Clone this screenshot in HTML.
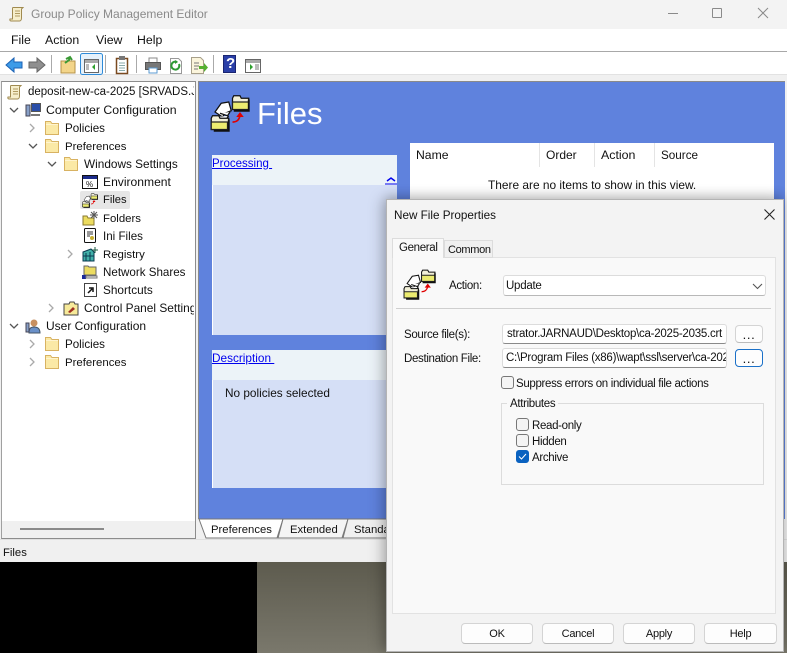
<!DOCTYPE html>
<html><head><meta charset="utf-8">
<style>
html,body{margin:0;padding:0;width:787px;height:653px;overflow:hidden;background:#000}
*{box-sizing:border-box}
#r{position:relative;width:787px;height:653px;overflow:hidden;font-family:"Liberation Sans",sans-serif;font-size:11.8px;color:#111}
.a{position:absolute}
.t{position:absolute;white-space:nowrap;line-height:16px;height:16px}
.d{font-size:11.5px;letter-spacing:-.33px}
.i{position:absolute;display:block;overflow:visible}
.inp{position:absolute;background:#fff;border:1px solid #dcdcdc;border-bottom:1px solid #8a8a8a;border-radius:3px;line-height:19px;padding-left:4px;overflow:hidden;white-space:nowrap;font-size:11.5px;letter-spacing:-.25px}
.btn{position:absolute;background:#fdfdfd;border:1px solid #d4d4d4;border-bottom-color:#bbb;border-radius:4px;text-align:center;line-height:21px;font-size:11px;letter-spacing:-.25px}
.dots{font-size:13px;letter-spacing:.6px;line-height:18px}
.cb{position:absolute;width:13px;height:13px;border:1px solid #777;border-radius:3px;background:#f4f4f4}
</style></head><body>
<div id="r">
<svg width="0" height="0" style="position:absolute"><defs>
<symbol id="fold" viewBox="0 0 16 16"><path d="M1.500 1.500h5l1.500 2h6.500v11h-13z" fill="#fbe9a6" stroke="#d8b262"/><path d="M2 4.500h12" stroke="#fff4cf"/></symbol>
<symbol id="scroll" viewBox="0 0 16 16"><path d="M4 1.500h10l-1.500 1.500v9c0 2-1 3-2 3H2c-1 0-1.500-1-1-2h2.500V3c0-1 0-1.500.5-1.500z" fill="#f6eecb" stroke="#a08a50"/><path d="M6 5h5M6 7.500h5M6 10h5" stroke="#b09a60"/></symbol>
<symbol id="files" viewBox="0 0 32 32">
<path d="M18 5l1-2h5l1 2h6v8H18z" fill="#f2f0d8" stroke="#111"/><path d="M18 8h13v6H18z" fill="#ecec70" stroke="#222"/><path d="M31 6v9H19" stroke="#111" stroke-width="1.500" fill="none"/>
<path d="M9 9l6-1 2 7-5 2-2 3-6-4z" fill="#fff" stroke="#111"/><path d="M8 17l6 2 2-3M6 20l6 3 3-4" fill="#fff" stroke="#111"/>
<path d="M1 21l1-2h5l1 2h7v9H1z" fill="#f2f0d8" stroke="#111"/><path d="M1 24h13v6H1z" fill="#ecec70" stroke="#222"/><path d="M15 22v9H3" stroke="#111" stroke-width="1.500" fill="none"/>
<path d="M18 24c3 0 5-1 6-5" fill="none" stroke="#e00000" stroke-width="1.300"/><path d="M21 20l3-4 3 4z" fill="#e00000"/>
</symbol>
</defs></svg>

<!-- desktop -->
<div class="a" style="left:0;top:562px;width:257px;height:91px;background:#000"></div>
<div class="a" style="left:257px;top:562px;width:530px;height:91px;background:linear-gradient(#5d5b4e,#7a786c)"></div>

<!-- window -->
<div class="a" style="left:0;top:0;width:787px;height:562px;background:#f0f0f0"></div>
<div class="a" style="left:0;top:0;width:787px;height:29px;background:#f3f3f3"></div>
<svg class="i" style="left:9px;top:5px" width="16" height="18"><use href="#scroll" width="16" height="18"/></svg>
<div class="t" style="left:31px;top:6px;color:#8a8a8a;font-size:12px">Group Policy Management Editor</div>
<div class="a" style="left:668px;top:13px;width:10px;height:1px;background:#8a8a8a"></div>
<div class="a" style="left:712px;top:8px;width:10px;height:10px;border:1px solid #8a8a8a;border-radius:1px"></div>
<svg class="i" style="left:757px;top:7px" width="12" height="12"><path d="M1 1l10 10M11 1L1 11" stroke="#8a8a8a" stroke-width="1"/></svg>

<div class="a" style="left:0;top:29px;width:787px;height:22px;background:#fff"></div>
<div class="a" style="left:0;top:51px;width:787px;height:1px;background:#a8a8a8"></div>
<div class="t" style="left:11px;top:32px;font-size:12.3px">File</div>
<div class="t" style="left:45px;top:32px;font-size:12.3px">Action</div>
<div class="t" style="left:96px;top:32px;font-size:12.3px">View</div>
<div class="t" style="left:137px;top:32px;font-size:12.3px">Help</div>

<div class="a" style="left:0;top:52px;width:787px;height:23px;background:#fff"></div>
<div class="a" style="left:0;top:74px;width:787px;height:1px;background:#e2e2e2"></div>
<!-- toolbar -->
<svg class="i" style="left:0;top:52px" width="270" height="24">
<path d="M6 13l8-7v4h8v6h-8v4z" fill="#3d9be8" stroke="#1c62b4"/>
<path d="M45 13l-8-7v4h-8v6h8v4z" fill="#8f8f8f" stroke="#666"/>
<rect x="51" y="3" width="1" height="18" fill="#aaa"/>
<path d="M61 9h14v12H61z" fill="#f3d58a" stroke="#b5924a"/><path d="M65 11l4-3 1-3M66 7l4-2 2 3" fill="none" stroke="#3a9a35" stroke-width="2"/>
<rect x="80.500" y="1.500" width="22" height="21" rx="2" fill="#e5f1fb" stroke="#2d8ad8"/>
<rect x="84.500" y="7.500" width="14" height="13" fill="#fff" stroke="#666"/><rect x="85" y="8" width="13" height="3" fill="#aaa"/><path d="M95 12v6l-3-3z" fill="#2da02d"/><path d="M86 13h3M86 15h3M86 17h3" stroke="#777"/>
<rect x="105" y="3" width="1" height="18" fill="#aaa"/>
<rect x="116.500" y="6.500" width="11" height="15" fill="#fff" stroke="#7a4a20" stroke-width="1.500"/><rect x="119" y="4" width="6" height="4" fill="#777"/><path d="M119 11h6M119 13.500h6M119 16h6M119 18.500h6" stroke="#8aa"/>
<rect x="136" y="3" width="1" height="18" fill="#aaa"/>
<rect x="149" y="6" width="8" height="5" fill="#fff" stroke="#888"/><rect x="145.500" y="10.500" width="15" height="7" fill="#777" stroke="#555"/><rect x="149" y="16" width="8" height="5" fill="#fff" stroke="#5a9ad0"/>
<path d="M170.500 6.500h8l3 3v12h-11z" fill="#fff" stroke="#999"/><path d="M179 12a4 4 0 1 1-2-2" fill="none" stroke="#2f9a35" stroke-width="2"/><path d="M175 8l3 2-3 2z" fill="#2f9a35"/>
<path d="M191.500 5.500h9l3 3v13h-12z" fill="#fbf5dc" stroke="#a8a08a"/><path d="M194 11h5M194 14h5M194 17h4" stroke="#777"/><path d="M199 14h5v-3l4 4.500-4 4.500v-3h-5z" fill="#55b030"/>
<rect x="213" y="3" width="1" height="18" fill="#aaa"/>
<rect x="223.500" y="3.500" width="12" height="17" fill="#2a3fa8" stroke="#1a2570"/>
<rect x="245.500" y="7.500" width="15" height="13" fill="#fff" stroke="#666"/><rect x="246" y="8" width="14" height="3" fill="#aaa"/><path d="M250 12v6l3-3z" fill="#2da02d"/><path d="M255 13h4M255 15h4M255 17h4" stroke="#777"/>
</svg>
<div class="t" style="left:226px;top:56px;color:#fff;font:bold 15px/16px 'Liberation Sans',sans-serif">?</div>

<!-- tree pane -->
<div class="a" style="left:1px;top:81px;width:195px;height:458px;background:#fff;border:1px solid #8c8c8c;border-left-color:#a0a0a0"></div>
<div class="a" style="left:2px;top:521px;width:193px;height:17px;background:#f0f0f0"></div>
<div class="a" style="left:20px;top:528px;width:84px;height:2px;background:#8a8a8a"></div>

<svg class="i" style="left:7px;top:83px" width="16" height="18"><use href="#scroll" width="16" height="18"/></svg>
<div class="a" style="left:2px;top:83px;width:192px;height:18px;overflow:hidden"><div class="t" style="left:26px;top:1px;font-size:11.5px">deposit-new-ca-2025 [SRVADS.JARNAUD.LAN]</div></div>

<svg class="i" style="left:0;top:100px" width="110" height="280" fill="none" stroke="#555" stroke-width="1.300">
<path d="M10 8l4 4 4-4"/><path d="M30 24l4 4-4 4" stroke="#aaa"/><path d="M29 44l4 4 4-4"/><path d="M48 62l4 4 4-4"/>
<path d="M68 150l4 4-4 4" stroke="#aaa"/><path d="M49 204l4 4-4 4" stroke="#aaa"/><path d="M10 224l4 4 4-4"/><path d="M30 240l4 4-4 4" stroke="#aaa"/><path d="M30 258l4 4-4 4" stroke="#aaa"/>
</svg>

<svg class="i" style="left:25px;top:102px" width="17" height="16"><rect x="6.500" y="1.500" width="9" height="8" fill="#2a4ea8" stroke="#555"/><rect x="1" y="3" width="4" height="11" fill="#88a0c8" stroke="#445"/><path d="M6 13h9" stroke="#777" stroke-width="2"/></svg>
<div class="t" style="left:46px;top:102px;font-size:12.3px">Computer Configuration</div>

<svg class="i" style="left:44px;top:120px" width="16" height="16"><use href="#fold"/></svg>
<div class="t" style="left:65px;top:121px;font-size:11.6px">Policies</div>
<svg class="i" style="left:44px;top:138px" width="16" height="16"><use href="#fold"/></svg>
<div class="t" style="left:65px;top:139px;font-size:11.4px">Preferences</div>
<svg class="i" style="left:63px;top:156px" width="16" height="16"><use href="#fold"/></svg>
<div class="t" style="left:84px;top:156px">Windows Settings</div>

<svg class="i" style="left:82px;top:175px" width="16" height="14"><rect x=".5" y=".5" width="15" height="13" fill="#fff" stroke="#111"/><rect x="1" y="1" width="14" height="3" fill="#1a2a8a"/><text x="4" y="12" font-size="8" font-family="Liberation Sans" fill="#111">%</text></svg>
<div class="t" style="left:103px;top:174px;font-size:12.1px">Environment</div>

<div class="a" style="left:80px;top:191px;width:50px;height:18px;background:#e6e6e6;border-radius:2px"></div>
<svg class="i" style="left:82px;top:192px" width="16" height="16"><use href="#files" width="16" height="16"/></svg>
<div class="t" style="left:103px;top:192px;font-size:11.2px">Files</div>

<svg class="i" style="left:82px;top:210px" width="16" height="16"><path d="M1 6h4l1 2h6v7H1z" fill="#ecdc60" stroke="#8a7a30"/><path d="M12 1v8M8 5h8M9 2l6 6M15 2L9 8" stroke="#555"/></svg>
<div class="t" style="left:103px;top:211px;font-size:11.4px">Folders</div>

<svg class="i" style="left:84px;top:227px" width="13" height="16"><rect x=".5" y="1.500" width="11" height="14" rx="1" fill="#fff" stroke="#111"/><path d="M3 5h6M3 7h6M3 9h3" stroke="#333"/><circle cx="8" cy="11" r="2" fill="#c8b030"/></svg>
<div class="t" style="left:103px;top:229px;font-size:11.6px">Ini Files</div>

<svg class="i" style="left:82px;top:246px" width="16" height="16"><path d="M1 6l8-3 3 3v9H1z" fill="#40b0a8" stroke="#0a3a50"/><path d="M4 7v8M8 6v9M1 10h11" stroke="#0a3a50"/><path d="M13 1v6M10 4h6" stroke="#1a5a40"/></svg>
<div class="t" style="left:103px;top:247px;font-size:11.4px">Registry</div>

<svg class="i" style="left:82px;top:264px" width="16" height="16"><path d="M2 2h4l1 1h7v8H2z" fill="#ecdc60" stroke="#666"/><rect x="0" y="11" width="4" height="4" fill="#1a2a9a"/><path d="M4 12h11v2H4z" fill="#eee" stroke="#777"/></svg>
<div class="t" style="left:103px;top:265px;font-size:11.6px">Network Shares</div>

<svg class="i" style="left:84px;top:283px" width="13" height="14"><rect x=".5" y=".5" width="12" height="13" fill="#fff" stroke="#444"/><path d="M4 10l4-4M5 5h4v4" fill="none" stroke="#111" stroke-width="1.500"/></svg>
<div class="t" style="left:103px;top:282px">Shortcuts</div>

<svg class="i" style="left:63px;top:300px" width="16" height="16"><path d="M1 4h5l1-2h4l1 2h3v11H1z" fill="#f7ea9a" stroke="#444"/><path d="M5 12l5-5 2 2-5 4z" fill="#a03020"/></svg>
<div class="a" style="left:2px;top:299px;width:192px;height:18px;overflow:hidden"><div class="t" style="left:82px;top:1px;font-size:11.9px">Control Panel Settings</div></div>

<svg class="i" style="left:25px;top:318px" width="17" height="16"><circle cx="9" cy="5" r="3.500" fill="#c89060"/><path d="M4 15c0-5 2-6 5-6s6 1 6 6z" fill="#6a90c8" stroke="#456"/><rect x="1" y="5" width="3" height="9" fill="#88a0c8" stroke="#445"/></svg>
<div class="t" style="left:46px;top:318px;font-size:12px">User Configuration</div>
<svg class="i" style="left:44px;top:336px" width="16" height="16"><use href="#fold"/></svg>
<div class="t" style="left:65px;top:337px;font-size:11.6px">Policies</div>
<svg class="i" style="left:44px;top:354px" width="16" height="16"><use href="#fold"/></svg>
<div class="t" style="left:65px;top:355px;font-size:11.4px">Preferences</div>

<!-- blue pane -->
<div class="a" style="left:198px;top:81px;width:587px;height:438px;background:#5f82dd;border:1px solid #8a8a8a;border-width:1px 0 0 1px"></div>
<svg class="i" style="left:210px;top:92px" width="40" height="40"><use href="#files" width="40" height="40"/></svg>
<div class="t" style="left:257px;top:95px;height:38px;line-height:38px;font-size:31px;color:#fff">Files</div>

<div class="a" style="left:212px;top:155px;width:185px;height:30px;background:#ecf3f8"></div>
<div class="a" style="left:213px;top:185px;width:184px;height:150px;background:#d5dff6"></div>
<div class="a" style="left:212px;top:185px;width:1px;height:150px;background:#fff"></div>
<div class="t" style="left:212px;top:156px;color:#0000ee;text-decoration:underline;white-space:pre;font-size:11.5px">Processing </div>
<svg class="i" style="left:385px;top:176px" width="12" height="9"><path d="M2 5l4-3 4 3" fill="none" stroke="#0000ee" stroke-width="1.500"/><path d="M0 8h12" stroke="#0000ee"/></svg>

<div class="a" style="left:212px;top:350px;width:185px;height:30px;background:#ecf3f8"></div>
<div class="a" style="left:213px;top:380px;width:184px;height:108px;background:#d5dff6"></div>
<div class="a" style="left:212px;top:380px;width:1px;height:108px;background:#fff"></div>
<div class="t" style="left:212px;top:350px;color:#0000ee;text-decoration:underline;white-space:pre">Description </div>
<div class="t" style="left:225px;top:385px">No policies selected</div>

<div class="a" style="left:410px;top:143px;width:364px;height:57px;background:#fff"></div>
<div class="a" style="left:539px;top:143px;width:1px;height:24px;background:#e4e4e4"></div>
<div class="a" style="left:594px;top:143px;width:1px;height:24px;background:#e4e4e4"></div>
<div class="a" style="left:654px;top:143px;width:1px;height:24px;background:#e4e4e4"></div>
<div class="t" style="left:416px;top:147px;font-size:12.2px">Name</div>
<div class="t" style="left:546px;top:147px;font-size:12px">Order</div>
<div class="t" style="left:601px;top:147px;font-size:12.4px">Action</div>
<div class="t" style="left:661px;top:148px;font-size:11.7px">Source</div>
<div class="t" style="left:488px;top:177px;font-size:11.9px">There are no items to show in this view.</div>

<!-- bottom tabs -->
<svg class="i" style="left:198px;top:519px" width="200" height="20">
<path d="M1 0l7 19h71l6-19z" fill="#fff" stroke="#777"/>
<path d="M85 0l-5 19h64l6-19z" fill="#f4f4f4" stroke="#777"/>
<path d="M145 19l5-19h50v19z" fill="#f0f0f0" stroke="#777"/>
</svg>
<div class="t" style="left:211px;top:522px;font-size:11.3px">Preferences</div>
<div class="t" style="left:290px;top:522px;font-size:11.3px">Extended</div>
<div class="t" style="left:354px;top:522px;font-size:11.3px">Standard</div>

<!-- status -->
<div class="a" style="left:0;top:539px;width:787px;height:1px;background:#e0e0e0"></div>
<div class="t" style="left:3px;top:545px;font-size:11.3px">Files</div>

<!-- dialog -->
<div class="a" style="left:386px;top:199px;width:398px;height:453px;background:#f3f3f3;border:1px solid #b4b4b4;box-shadow:-4px 0 14px rgba(0,0,0,.22),0 -3px 10px rgba(0,0,0,.15)"></div>
<div class="t" style="left:394px;top:208px;font-size:11.7px">New File Properties</div>
<svg class="i" style="left:764px;top:209px" width="11" height="11"><path d="M.5.500l10 10M10.500.500l-10 10" stroke="#222" stroke-width="1.100"/></svg>

<div class="a" style="left:392px;top:257px;width:384px;height:357px;background:#f9f9f9;border:1px solid #e2e2e2"></div>
<div class="a" style="left:444px;top:240px;width:49px;height:18px;background:#f0f0f0;border:1px solid #dcdcdc"></div>
<div class="a" style="left:392px;top:238px;width:52px;height:20px;background:#f9f9f9;border:1px solid #dcdcdc;border-bottom:0"></div>
<div class="t d" style="left:399px;top:240px">General</div>
<div class="t d" style="left:448px;top:242px;font-size:11px">Common</div>

<svg class="i" style="left:403px;top:267px" width="33" height="33"><use href="#files" width="33" height="33"/></svg>
<div class="t d" style="left:449px;top:278px">Action:</div>
<div class="inp" style="left:503px;top:275px;width:263px;height:21px;line-height:20px;padding-left:2px;border-color:#dcdcdc;border-bottom-color:#b8b8b8">Update</div>
<svg class="i" style="left:752px;top:283px" width="11" height="7"><path d="M1 1l4.500 4.500L10 1" fill="none" stroke="#555" stroke-width="1.100"/></svg>
<div class="a" style="left:396px;top:308px;width:375px;height:1px;background:#cfcfcf"></div>

<div class="t d" style="left:404px;top:327px">Source file(s):</div>
<div class="inp" style="left:502px;top:324px;width:225px;height:20px">strator.JARNAUD\Desktop\ca-2025-2035.crt</div>
<div class="btn dots" style="left:735px;top:325px;width:28px;height:18px">...</div>
<div class="t d" style="left:404px;top:351px">Destination File:</div>
<div class="inp" style="left:502px;top:348px;width:225px;height:20px;padding-left:3px">C:\Program Files (x86)\wapt\ssl\server\ca-2025-2035.crt</div>
<div class="btn dots" style="left:735px;top:349px;width:28px;height:18px;border:1.500px solid #1a70c8">...</div>

<div class="cb" style="left:501px;top:376px"></div>
<div class="t d" style="left:516px;top:376px">Suppress errors on individual file actions</div>

<div class="a" style="left:501px;top:403px;width:263px;height:82px;border:1px solid #dcdcdc"></div>
<div class="t d" style="left:507px;top:397px;height:14px;line-height:14px;background:#f9f9f9;padding:0 3px">Attributes</div>
<div class="cb" style="left:516px;top:418px"></div>
<div class="t d" style="left:532px;top:418px">Read-only</div>
<div class="cb" style="left:516px;top:434px"></div>
<div class="t d" style="left:532px;top:434px">Hidden</div>
<div class="cb" style="left:516px;top:450px;background:#0a62c0;border-color:#0a62c0"></div>
<svg class="i" style="left:516px;top:450px" width="13" height="13"><path d="M3 6.500l2.500 2.500L10 4" fill="none" stroke="#fff" stroke-width="1"/></svg>
<div class="t d" style="left:532px;top:450px">Archive</div>

<div class="btn" style="left:461px;top:623px;width:72px;height:21px">OK</div>
<div class="btn" style="left:542px;top:623px;width:72px;height:21px">Cancel</div>
<div class="btn" style="left:623px;top:623px;width:72px;height:21px">Apply</div>
<div class="btn" style="left:704px;top:623px;width:73px;height:21px">Help</div>
</div>
</body></html>
